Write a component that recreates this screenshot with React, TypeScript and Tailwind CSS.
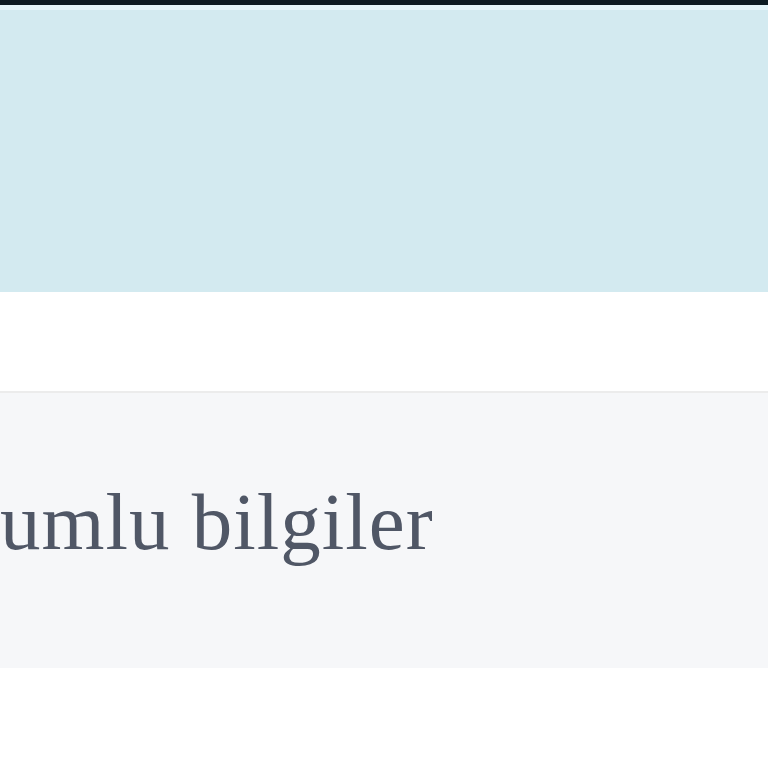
import React from "react";

export default function App() {
  return (
    <div className="min-h-[768px] w-[768px] overflow-hidden bg-white">
      <div className="h-[5px] bg-[#0b1a22]" />
      <div className="h-[5px] bg-[#e2f4f9]" />
      <div className="h-[282px] bg-[#d3eaf0]" />
      <div className="h-[99px] bg-white" />
      <div className="h-[2px] bg-[#ececec]" />
      <div className="h-[275px] bg-[#f6f7f9] pt-[89px]">
        <p className="whitespace-nowrap text-[81px] leading-none tracking-[1px] text-[#505766] [font-family:'Liberation_Serif',serif]">
          umlu bilgiler
        </p>
      </div>
    </div>
  );
}
